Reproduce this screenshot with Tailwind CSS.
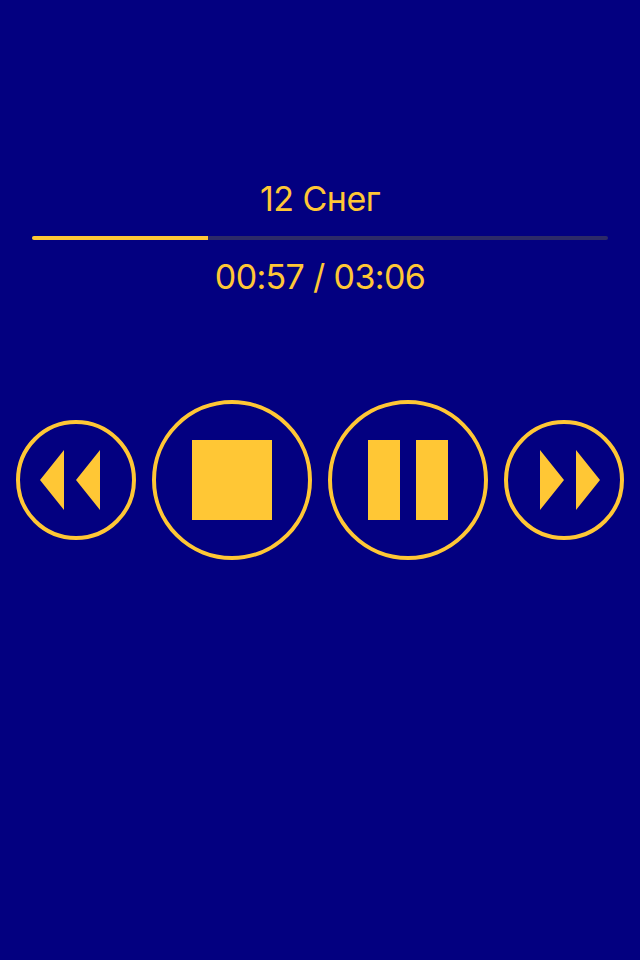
<!DOCTYPE html>
<html lang="ru">
<head>
    <meta charset="UTF-8">
    <meta name="viewport" content="width=device-width, initial-scale=1.0">
    <title>Player</title>
    <script src="https://cdn.jsdelivr.net/npm/@tailwindcss/browser@4"></script>
</head>
<body class="bg-[#030080] text-[#ffc735] font-['Inter',sans-serif]">
    <div class="h-[960px] overflow-hidden flex flex-col pt-[179px]">
        <h1 class="text-[34px] leading-10 tracking-[-0.5px] text-center">12 Снег</h1>

        <div class="mx-8 mt-[17px] h-1 rounded-full bg-[#2d2a68] overflow-hidden">
            <div class="h-full bg-[#ffc735]" style="width: 176px"></div>
        </div>

        <p class="mt-[17px] text-[34px] leading-10 tracking-[-0.65px] text-center">00:57 / 03:06</p>

        <div class="mt-[103px] px-4 flex items-center justify-between">
            <button class="w-[120px] h-[120px] rounded-full border-4 border-[#ffc735] flex items-center justify-center" aria-label="Previous">
                <svg class="w-[60px] h-[60px] shrink-0 -ml-3" viewBox="0 0 60 60" fill="currentColor">
                    <path d="M0 30 24 0v60zM36 30 60 0v60z"/>
                </svg>
            </button>
            <button class="w-40 h-40 rounded-full border-4 border-[#ffc735] flex items-center justify-center" aria-label="Stop">
                <span class="w-20 h-20 bg-[#ffc735]"></span>
            </button>
            <button class="w-40 h-40 rounded-full border-4 border-[#ffc735] flex items-center justify-center gap-4" aria-label="Pause">
                <span class="w-8 h-20 bg-[#ffc735]"></span>
                <span class="w-8 h-20 bg-[#ffc735]"></span>
            </button>
            <button class="w-[120px] h-[120px] rounded-full border-4 border-[#ffc735] flex items-center justify-center" aria-label="Next">
                <svg class="w-[60px] h-[60px] shrink-0 -mr-3" viewBox="0 0 60 60" fill="currentColor">
                    <path d="M0 0 24 30 0 60zM36 0 60 30 36 60z"/>
                </svg>
            </button>
        </div>
    </div>
</body>
</html>
